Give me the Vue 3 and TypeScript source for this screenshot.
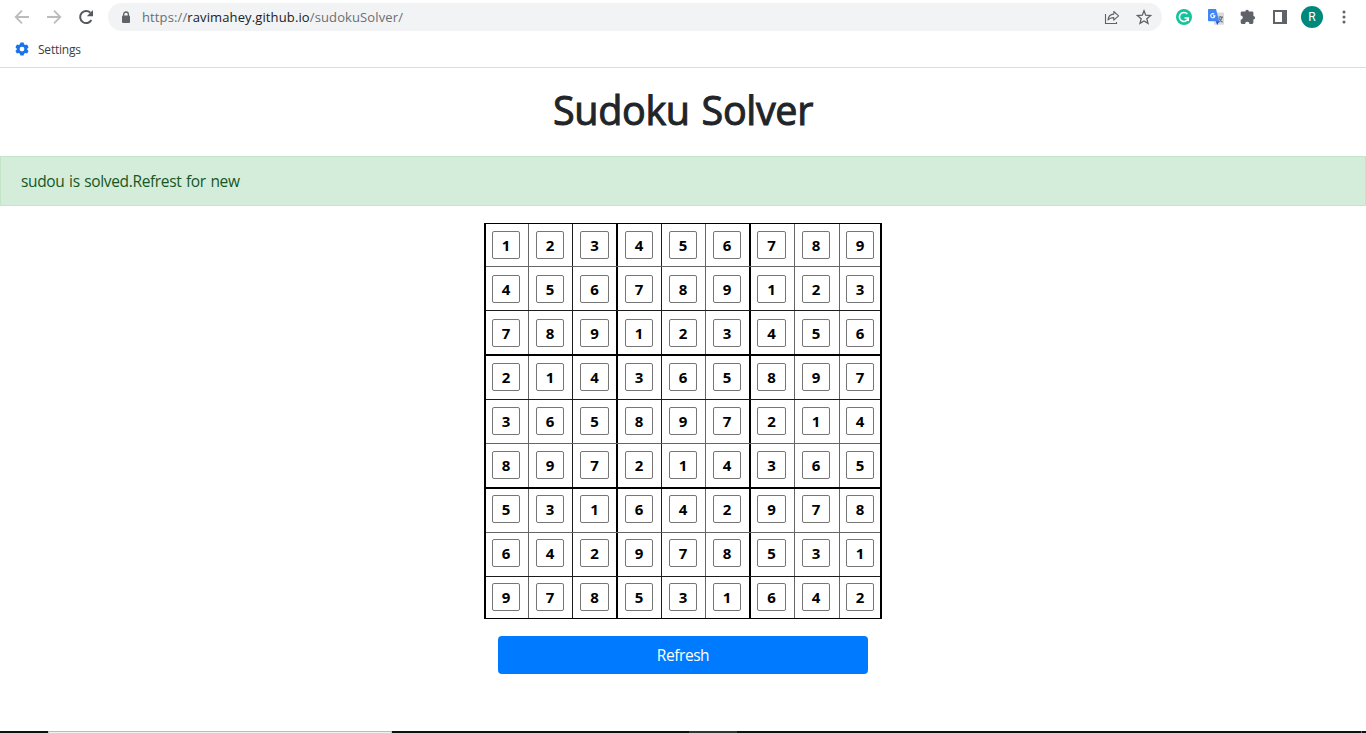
<script setup lang="ts">
const board: number[][] = [
  [1, 2, 3, 4, 5, 6, 7, 8, 9],
  [4, 5, 6, 7, 8, 9, 1, 2, 3],
  [7, 8, 9, 1, 2, 3, 4, 5, 6],
  [2, 1, 4, 3, 6, 5, 8, 9, 7],
  [3, 6, 5, 8, 9, 7, 2, 1, 4],
  [8, 9, 7, 2, 1, 4, 3, 6, 5],
  [5, 3, 1, 6, 4, 2, 9, 7, 8],
  [6, 4, 2, 9, 7, 8, 5, 3, 1],
  [9, 7, 8, 5, 3, 1, 6, 4, 2],
]
</script>

<template>
  <div class="window">
    <header class="chrome">
      <div class="toolbar">
        <svg class="nav" width="16" height="16" viewBox="0 0 16 16"><path d="M15 8H2M8 1.7 1.7 8 8 14.3" fill="none" stroke="#babcbe" stroke-width="1.8" /></svg>
        <svg class="nav" width="16" height="16" viewBox="0 0 16 16"><path d="M1 8h13M8 1.7 14.3 8 8 14.3" fill="none" stroke="#babcbe" stroke-width="1.8" /></svg>
        <svg class="nav" width="16" height="16" viewBox="0 0 16 16"><path d="M13.4 11A6 6 0 1 1 12.4 3.8" fill="none" stroke="#55595e" stroke-width="2" /><path d="M15 1v6.2H8.8z" fill="#55595e" /></svg>
        <div class="address">
          <svg class="lock" width="10" height="13" viewBox="0 0 10 13"><path d="M2.6 5V3.4a2.4 2.4 0 0 1 4.8 0V5" fill="none" stroke="#5f6368" stroke-width="1.3" /><rect x="1" y="4.6" width="8" height="7.4" rx="1" fill="#5f6368" /></svg>
          <span class="url">https://<b>ravimahey.github.io</b>/sudokuSolver/</span>
          <svg class="share" width="16" height="16" viewBox="0 0 16 16"><path d="M1.500 5v9.500h11V13" fill="none" stroke="#5f6368" stroke-width="1.1" /><path d="M4 11c.3-3.900 2.300-5.700 5.800-5.900V2.500l4.800 4.300-4.800 4.400V8.600C7 8.500 5.300 9.200 4 11z" fill="none" stroke="#5f6368" stroke-width="1.1" stroke-linejoin="round" /></svg>
          <svg width="16" height="16" viewBox="0 0 16 16"><path d="m8 1.800 1.700 4.400 4.900.3-3.800 3.200 1.200 4.700L8 11.900l-4 2.500 1.200-4.700-3.800-3.200 4.900-.3z" fill="none" stroke="#5f6368" stroke-width="1.3" /></svg>
        </div>
        <div class="extensions">
          <svg width="16" height="16" viewBox="0 0 16 16"><circle cx="8" cy="8" r="8" fill="#15c39a" /><path d="M11.300 5A4.500 4.500 0 1 0 12.300 9H8.500M12.200 12V9" fill="none" stroke="#fff" stroke-width="1.6" /></svg>
          <svg width="16" height="16" viewBox="0 0 16 16"><rect x="6" y="3.5" width="10" height="12.3" rx=".6" fill="#dadada" /><path d="M10.500 8.200H15M12.500 7v1.200M14 8.500c-.5 2-1.600 3.500-3.500 4.700M11 9.300c.7 1.800 1.800 3 3.600 3.800" fill="none" stroke="#607d8b" stroke-width="1.2" /><path d="M.8 0h7.200l3.200 12.200H.8a.8.8 0 0 1-.8-.8V.8A.8.8 0 0 1 .8 0z" fill="#4285f4" /><path d="m7.800 12.200 1.400 3.800 2-3.800z" fill="#2a48c8" /><path d="M6.300 5.200A2.100 2.100 0 1 0 6.900 6.900H5" fill="none" stroke="#fff" stroke-width="1.100" /></svg>
          <svg width="16" height="16" viewBox="0 0 16 16"><path d="M5.300 2.500a1.800 1.800 0 0 1 3.600 0h3.200c.7 0 1.300.5 1.300 1.200V7a1.700 1.700 0 0 1 0 3.400v3.200c0 .7-.6 1.300-1.300 1.300H9.500a2.200 2.200 0 0 0-4.400 0H2c-.7 0-1.300-.6-1.300-1.300v-2.900a2.100 2.100 0 0 0 0-4.200V3.700c0-.7.6-1.200 1.300-1.200z" fill="#5f6368" /></svg>
          <svg width="16" height="16" viewBox="0 0 16 16"><path d="M1 1h14v14H1zM3 3v10h7V3z" fill="#5f6368" fill-rule="evenodd" /></svg>
          <span class="avatar">R</span>
          <svg class="more" width="4" height="14" viewBox="0 0 4 14"><circle cx="2" cy="2" r="1.5" fill="#5f6368" /><circle cx="2" cy="7" r="1.5" fill="#5f6368" /><circle cx="2" cy="12" r="1.5" fill="#5f6368" /></svg>
        </div>
      </div>
      <div class="bookmarks">
        <svg width="14" height="14" viewBox="0 0 14 14"><path d="M5.400.5h3.200l.5 1.800 1.200.7 1.800-.5 1.500 2.700L12.300 6.500v1.200l1.300 1.200-1.500 2.700-1.800-.5-1.200.7-.5 1.700H5.400l-.5-1.700-1.200-.7-1.800.5L.4 8.900l1.300-1.200V6.500L.4 5.200l1.500-2.700 1.800.5 1.200-.7zM7 4.700a2.400 2.400 0 1 0 0 4.800 2.400 2.400 0 0 0 0-4.800z" fill="#1a73e8" fill-rule="evenodd" /></svg>
        <span>Settings</span>
      </div>
    </header>

    <main>
      <h1>Sudoku Solver</h1>
      <div class="alert">sudou is solved.Refrest for new</div>
      <div class="board">
        <div v-for="(row, r) in board" :key="r" class="row">
          <div v-for="(digit, c) in row" :key="c" class="cell">
            <div class="digit">{{ digit }}</div>
          </div>
        </div>
      </div>
      <button class="refresh" type="button">Refresh</button>
    </main>

    <footer class="taskbar">
      <div class="search"></div>
      <div class="active"></div>
      <div class="desktop"></div>
    </footer>
  </div>
</template>

<style>
body {
  margin: 0;
  overflow: hidden;
}
</style>

<style scoped>
.window {
  box-sizing: border-box;
  width: 1366px;
  height: 733px;
  display: flex;
  flex-direction: column;
  background: #fff;
  color: #212529;
  font-family: "Open Sans", "Noto Sans", sans-serif;
}
.window * {
  box-sizing: border-box;
}
svg {
  display: block;
  flex: none;
}
.chrome {
  height: 68px;
  flex: none;
  border-bottom: 1px solid #dadce0;
}
.toolbar {
  display: flex;
  align-items: center;
  height: 34px;
  padding-left: 14px;
}
.nav {
  margin-right: 16px;
}
.address {
  display: flex;
  align-items: center;
  width: 1054px;
  height: 28px;
  margin-left: -2px;
  padding: 0 10px 0 13px;
  border-radius: 14px;
  background: #f1f3f4;
}
.url {
  flex: 1;
  margin-left: 11px;
  color: #6b6f73;
  font-size: 13px;
  letter-spacing: 0.12px;
  white-space: nowrap;
}
.url b {
  color: #202124;
  font-weight: 400;
}
.share {
  margin-right: 16px;
}
.extensions {
  display: flex;
  align-items: center;
  gap: 16px;
  margin-left: 14px;
}
.avatar {
  width: 22px;
  height: 22px;
  margin: 0 -3px;
  border-radius: 50%;
  background: #00897b;
  color: #fff;
  font: 12px/22px Roboto, sans-serif;
  text-align: center;
}
.more {
  margin-left: 6px;
}
.bookmarks {
  display: flex;
  align-items: center;
  gap: 9px;
  height: 30px;
  padding-left: 15px;
  color: #3c4043;
  font-size: 12px;
  letter-spacing: -0.22px;
}
main {
  flex: 1;
  display: flex;
  flex-direction: column;
  align-items: center;
}
h1 {
  margin: 18px 0 22px;
  font-size: 39.5px;
  font-weight: 400;
  line-height: 48px;
  letter-spacing: -0.35px;
  word-spacing: 2px;
  -webkit-text-stroke: 1px #212529;
}
.alert {
  align-self: stretch;
  height: 50px;
  padding: 0 20px;
  border: 1px solid #c3e6cb;
  background: #d4edda;
  color: #155724;
  font-size: 15.5px;
  line-height: 49px;
  letter-spacing: -0.36px;
  word-spacing: 1px;
}
.board {
  width: 398px;
  height: 396px;
  margin-top: 17px;
  border: solid #000;
  border-width: 1px 2px;
  display: grid;
  grid-template-rows: 43px 44px 45px 44px 44px 45px 44px 44px 41px;
}
.row {
  display: grid;
  grid-template-columns: 43px 44px 45px 44px 44px 45px 44px 45px 40px;
  border-bottom: 1px solid #666;
}
.row:nth-child(2),
.row:nth-child(4),
.row:nth-child(8) {
  border-bottom-color: #1c1c1c;
}
.row:nth-child(3n) {
  border-bottom: 2px solid #000;
}
.row:last-child {
  border-bottom: 0;
}
.cell {
  padding: 7px 0 0 7px;
  border-right: 1px solid #666;
}
.row:nth-child(2) .cell,
.row:nth-child(3) .cell {
  padding-top: 8px;
}
.row:nth-child(n + 7) .cell {
  padding-top: 6px;
}
.cell:nth-child(2),
.cell:nth-child(4) {
  border-right-color: #1c1c1c;
}
.cell:nth-child(3n) {
  border-right: 2px solid #000;
}
.cell:last-child {
  border-right: 0;
}
.cell:first-child,
.cell:nth-child(7),
.cell:last-child {
  padding-left: 6px;
}
.digit {
  width: 28px;
  height: 28px;
  border: 1px solid #767676;
  border-radius: 2px;
  color: #000;
  font-size: 15px;
  font-weight: 700;
  line-height: 27px;
  text-align: center;
}
.cell:nth-child(3) .digit,
.cell:nth-child(7) .digit {
  width: 29px;
}
.refresh {
  width: 370px;
  height: 38px;
  margin-top: 17px;
  padding: 0 0 1px;
  border: 0;
  border-radius: 4px;
  background: #007bff;
  color: #fff;
  font: inherit;
  font-size: 15.5px;
  letter-spacing: -0.45px;
}
.taskbar {
  display: flex;
  flex: none;
  height: 2px;
  background: #101114;
}
.search {
  width: 344px;
  margin-left: 48px;
  border: solid #bcbcbc;
  border-width: 1px 1px 0;
  background: #f2f2f2;
}
.active {
  width: 48px;
  margin-left: 297px;
  background: #333436;
}
.desktop {
  width: 1px;
  margin-left: 624px;
  background: #66676a;
}
</style>
